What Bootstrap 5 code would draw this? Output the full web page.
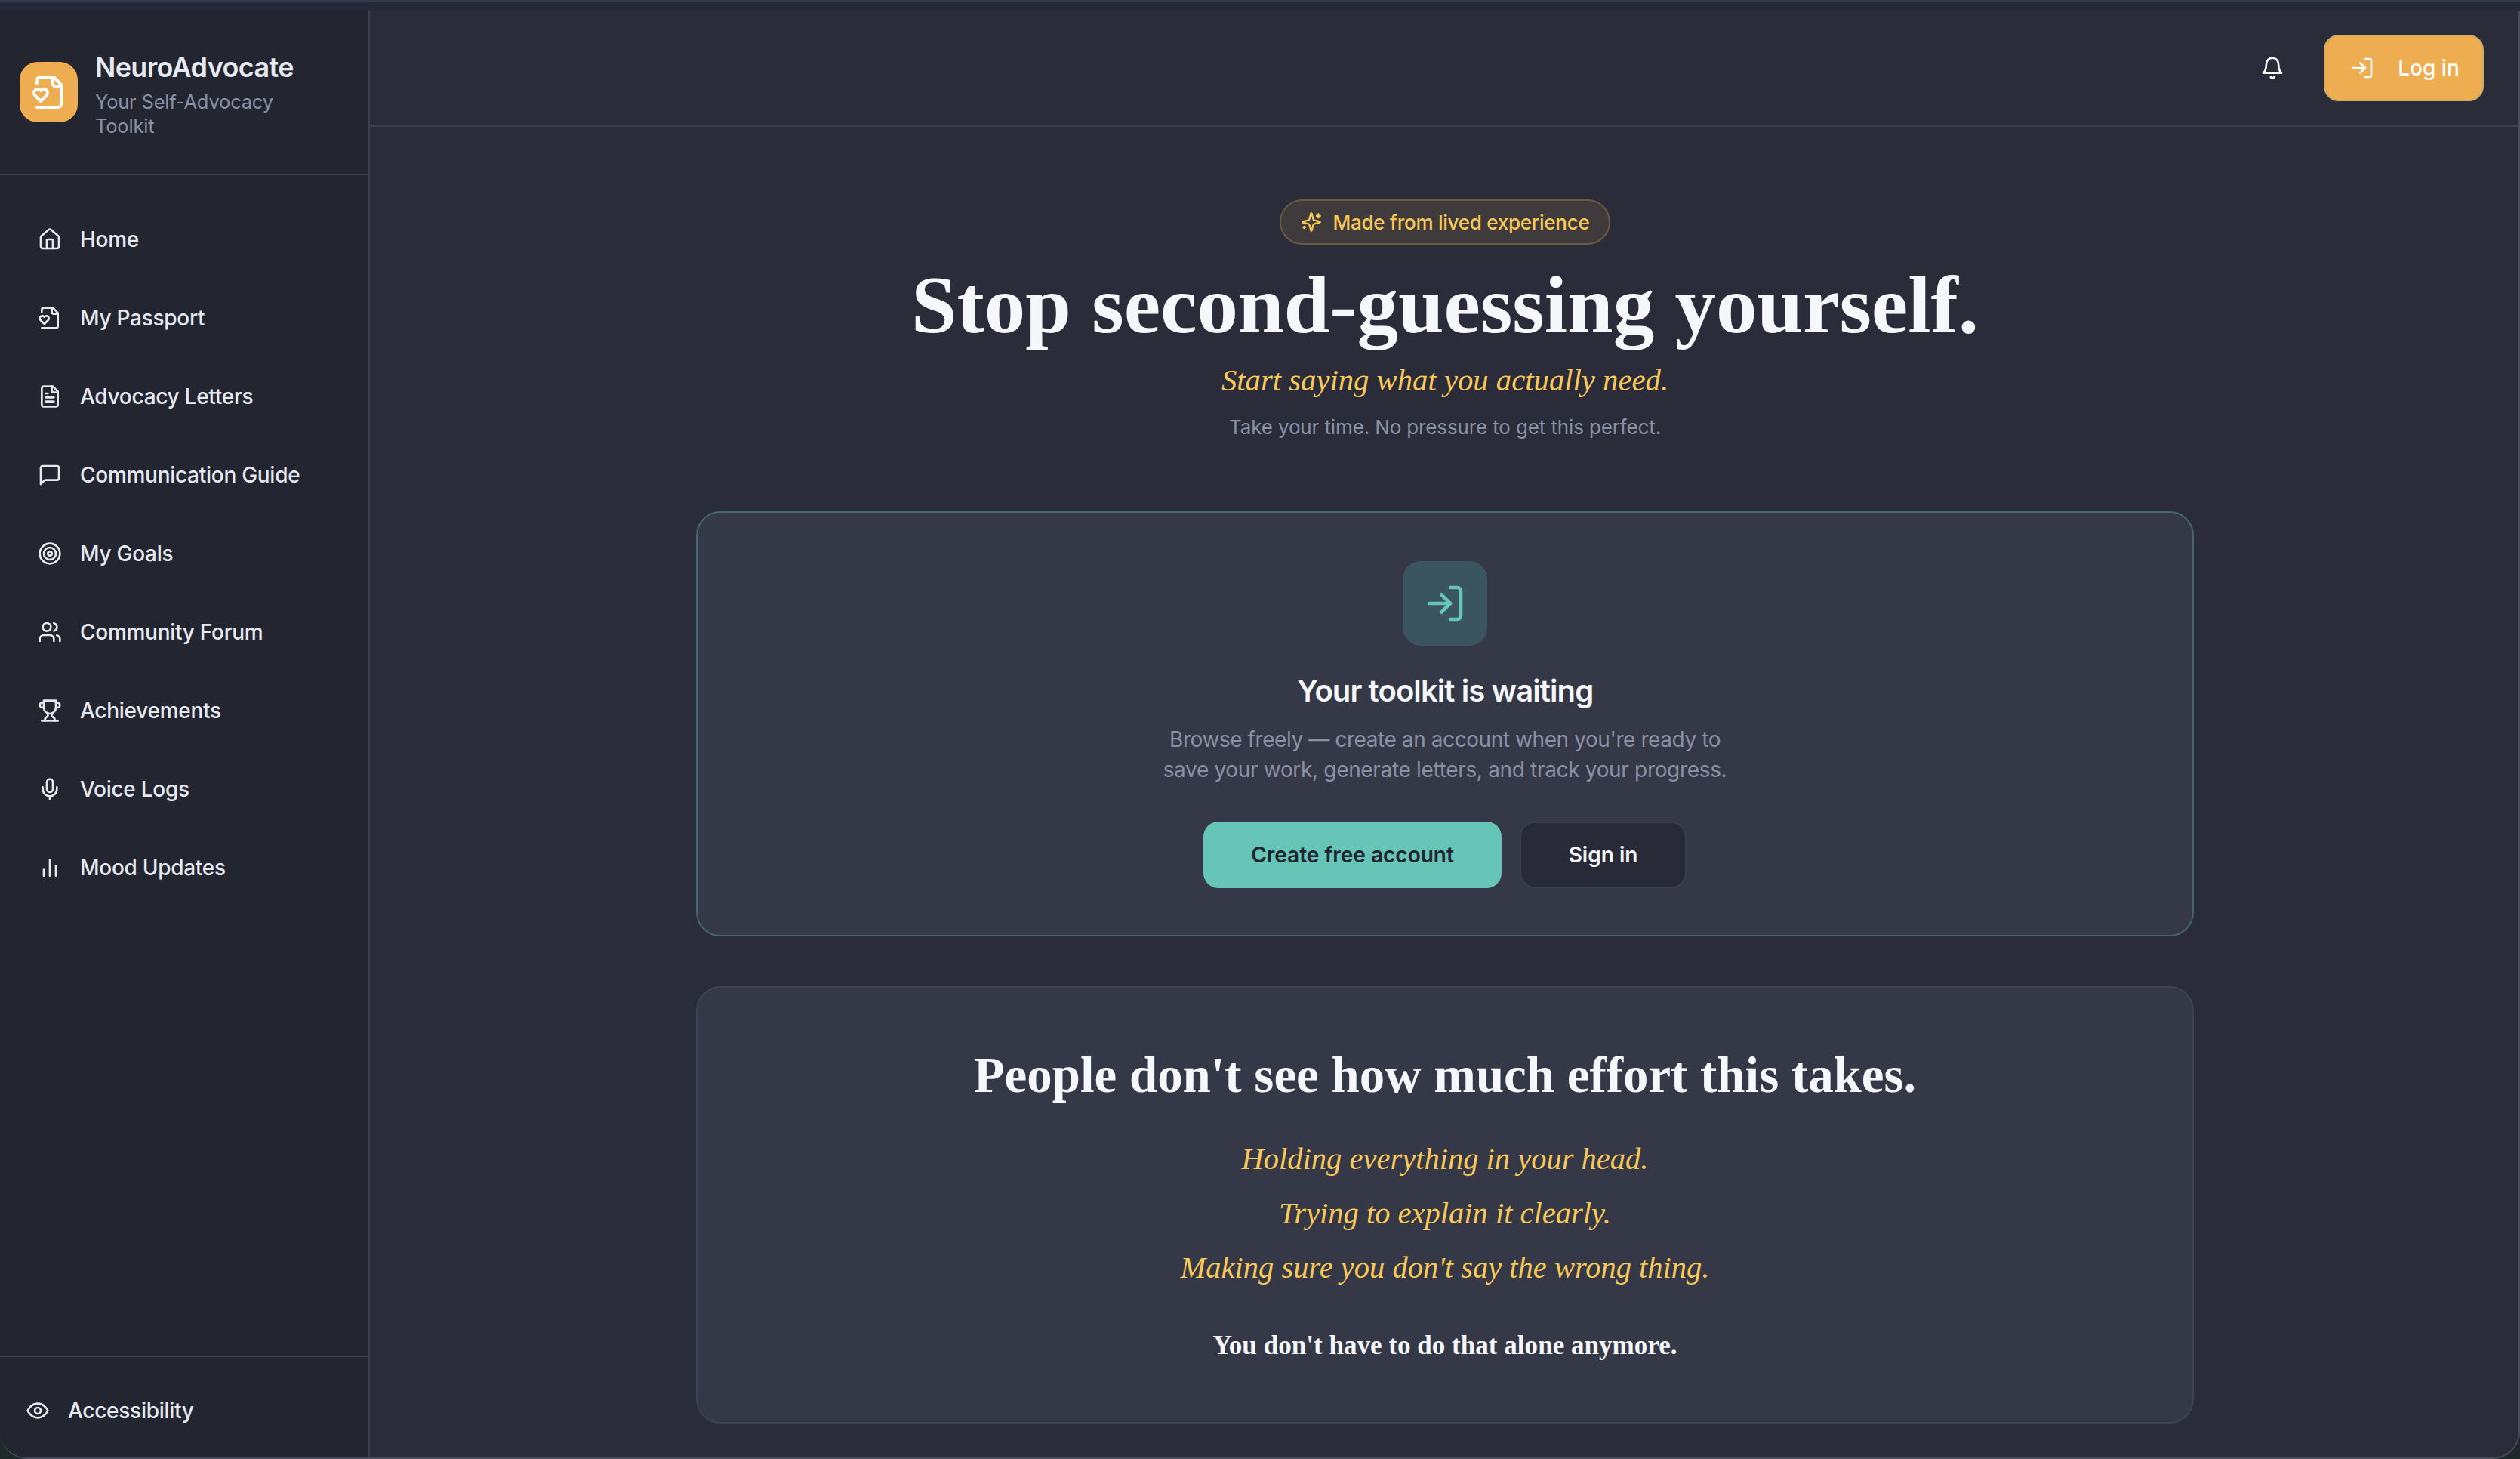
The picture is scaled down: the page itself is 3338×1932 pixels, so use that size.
<!doctype html>
<html lang="en">
<head>
<meta charset="utf-8">
<title>NeuroAdvocate</title>
<link rel="stylesheet" href="https://cdn.jsdelivr.net/npm/bootstrap@5.3.0/dist/css/bootstrap.min.css">
<style>
html,body{height:100%;overflow:hidden}
body{background:#1e2a2a;font-family:Inter,"Liberation Sans",sans-serif;color:#e6e9f0}
.top-strip{height:14px;background:#242a37;border-top:2px solid #333a47;flex:none}
.win{flex:1 1 auto;min-height:0;border-right:2px solid #4a4c5c;border-bottom:2px solid #4a4c5c;border-radius:0 0 36px 36px;overflow:hidden;background:#2a2d39}
.side{width:490px;flex:none;background:#232530;border-right:2px solid #3c3e4f}
.brand{height:218px;padding:0 24px 0 26px;border-bottom:2px solid #3c3e4f;gap:23px}
.logo-tile{width:77px;height:80px;flex:none;background:#eead50;border-radius:24px;color:#fff}
.logo-tile svg{width:48px;height:48px}
.brand-name{font-size:36px;line-height:56px;font-weight:600;letter-spacing:-.65px;color:#e6e9f0}
.brand-sub{font-size:25.5px;line-height:32px;letter-spacing:-.2px;color:#8b91a5;margin-top:2px}
.side-nav{padding:33px 24px 0}
.nav-row{height:104px;padding:0 26px;gap:24px;font-size:28px;font-weight:500;letter-spacing:-.28px;color:#e6e9f0;text-decoration:none}
.nav-row:hover{color:#fff}
.ic{width:32px;height:32px;flex:none;fill:none;stroke:currentColor;stroke-width:2;stroke-linecap:round;stroke-linejoin:round}
.side-foot{height:135px;padding:8px 34px 0;border-top:2px solid #3c3e4f;gap:24px;font-size:28px;font-weight:500;letter-spacing:-.28px}
.topbar{height:154px;flex:none;padding:0 46px 0 0;border-bottom:2px solid #3c3e4f;gap:52px}
.bell{color:#fff}
.login-btn{width:212px;height:88px;background:#eead50;border:2px solid #c9ae66;border-radius:20px;color:#fff;font-size:28px;font-weight:500;gap:31px;padding:0 0 0 3px}
.login-btn:hover{background:#eead50;color:#fff}
.stage{padding-top:96px;padding-left:2px}
.pill-tag{height:60px;padding:0 26px;gap:15px;background:#3f3b3d;border:2px solid #6b5a40;border-radius:30px;color:#f9c858;font-size:26px;font-weight:500;letter-spacing:-.25px}
.pill-tag svg{width:28px;height:28px}
.hero-h{font-family:"Liberation Serif",serif;font-weight:700;font-size:109px;line-height:120px;color:#f6f7fa;margin:20px 0 0}
.hero-i{font-family:"Liberation Serif",serif;font-style:italic;font-size:40.7px;line-height:56px;color:#f9c858;margin:12px 0 0}
.hero-s{font-size:26px;line-height:40px;letter-spacing:-.13px;color:#8b91a5;margin:14px 0 0}
.panel{width:1984px;background:#353846;border:2px solid #3f4252;border-radius:32px;text-align:center}
.panel-a{height:563px;margin-top:91px;border-color:#44686f;padding-top:64px}
.panel-b{height:579px;margin-top:66px;padding-top:73px}
.enter-tile{width:112px;height:112px;background:#3a5560;border-radius:24px;color:#66c5b7}
.enter-tile svg{width:56px;height:56px}
.panel-h{font-size:40px;line-height:56px;font-weight:600;letter-spacing:-.9px;color:#f6f7fa;margin:32px 0 0}
.panel-p{font-size:28px;line-height:40px;letter-spacing:-.33px;color:#8b91a5;margin:16px 0 0}
.panel-p-tight{letter-spacing:-.42px}
.cta{height:88px;border-radius:20px;font-size:28px;font-weight:600;padding:0}
.cta-a{width:395px;background:#66c5b7;border:0;color:#21242e}
.cta-a:hover{background:#66c5b7;color:#21242e}
.cta-b{width:221px;background:#282b37;border:2px solid #3c3e4f;color:#f6f7fa}
.cta-b:hover{background:#282b37;color:#f6f7fa}
.cta-row{gap:24px;margin-top:49px}
.quote-h{font-family:"Liberation Serif",serif;font-weight:700;font-size:66.9px;line-height:84px;color:#f6f7fa;margin:0}
.quote-l{font-family:"Liberation Serif",serif;font-style:italic;font-size:40.5px;line-height:72px;color:#f9c858;margin:0}
.quote-stack{margin-top:34px}
.quote-e{font-family:"Liberation Serif",serif;font-weight:700;font-size:35.1px;line-height:48px;color:#f6f7fa;margin:43px 0 0}
</style>
</head>
<body class="d-flex flex-column">
<div class="top-strip"></div>
<div class="win d-flex">
  <aside class="side d-flex flex-column">
    <div class="brand d-flex align-items-center">
      <div class="logo-tile d-flex align-items-center justify-content-center">
        <svg class="ic" viewBox="0 0 24 24"><path d="M4 22h14a2 2 0 0 0 2-2V7l-5-5H6a2 2 0 0 0-2 2v2"/><path d="M14 2v4a2 2 0 0 0 2 2h4"/><path d="M10.29 10.7a2.43 2.43 0 0 0-2.66-.52c-.29.12-.56.3-.78.53l-.35.34-.35-.34a2.43 2.43 0 0 0-2.65-.53c-.3.12-.56.3-.79.53-.95.94-1 2.53.2 3.74L6.5 18l3.6-3.55c1.2-1.21 1.14-2.8.19-3.74Z"/></svg>
      </div>
      <div>
        <div class="brand-name">NeuroAdvocate</div>
        <div class="brand-sub">Your Self-Advocacy<br>Toolkit</div>
      </div>
    </div>
    <nav class="side-nav d-flex flex-column flex-grow-1">
      <a class="nav-row d-flex align-items-center" href="#"><svg class="ic" viewBox="0 0 24 24"><path d="M15 21v-8a1 1 0 0 0-1-1h-4a1 1 0 0 0-1 1v8"/><path d="M3 10a2 2 0 0 1 .709-1.528l7-5.999a2 2 0 0 1 2.582 0l7 5.999A2 2 0 0 1 21 10v9a2 2 0 0 1-2 2H5a2 2 0 0 1-2-2z"/></svg>Home</a>
      <a class="nav-row d-flex align-items-center" href="#"><svg class="ic" viewBox="0 0 24 24"><path d="M4 22h14a2 2 0 0 0 2-2V7l-5-5H6a2 2 0 0 0-2 2v2"/><path d="M14 2v4a2 2 0 0 0 2 2h4"/><path d="M10.29 10.7a2.43 2.43 0 0 0-2.66-.52c-.29.12-.56.3-.78.53l-.35.34-.35-.34a2.43 2.43 0 0 0-2.65-.53c-.3.12-.56.3-.79.53-.95.94-1 2.53.2 3.74L6.5 18l3.6-3.55c1.2-1.21 1.14-2.8.19-3.74Z"/></svg>My Passport</a>
      <a class="nav-row d-flex align-items-center" href="#"><svg class="ic" viewBox="0 0 24 24"><path d="M15 2H6a2 2 0 0 0-2 2v16a2 2 0 0 0 2 2h12a2 2 0 0 0 2-2V7Z"/><path d="M14 2v4a2 2 0 0 0 2 2h4"/><path d="M10 9H8"/><path d="M16 13H8"/><path d="M16 17H8"/></svg>Advocacy Letters</a>
      <a class="nav-row d-flex align-items-center" href="#"><svg class="ic" viewBox="0 0 24 24"><path d="M21 15a2 2 0 0 1-2 2H7l-4 4V5a2 2 0 0 1 2-2h14a2 2 0 0 1 2 2z"/></svg>Communication Guide</a>
      <a class="nav-row d-flex align-items-center" href="#"><svg class="ic" viewBox="0 0 24 24"><circle cx="12" cy="12" r="10"/><circle cx="12" cy="12" r="6"/><circle cx="12" cy="12" r="2"/></svg>My Goals</a>
      <a class="nav-row d-flex align-items-center" href="#"><svg class="ic" viewBox="0 0 24 24"><path d="M16 21v-2a4 4 0 0 0-4-4H6a4 4 0 0 0-4 4v2"/><circle cx="9" cy="7" r="4"/><path d="M22 21v-2a4 4 0 0 0-3-3.87"/><path d="M16 3.13a4 4 0 0 1 0 7.75"/></svg>Community Forum</a>
      <a class="nav-row d-flex align-items-center" href="#"><svg class="ic" viewBox="0 0 24 24"><path d="M6 9H4.5a2.5 2.5 0 0 1 0-5H6"/><path d="M18 9h1.5a2.5 2.5 0 0 0 0-5H18"/><path d="M4 22h16"/><path d="M10 14.66V17c0 .55-.47.98-.97 1.21C7.85 18.75 7 20.24 7 22"/><path d="M14 14.66V17c0 .55.47.98.97 1.21C16.15 18.75 17 20.24 17 22"/><path d="M18 2H6v7a6 6 0 0 0 12 0V2Z"/></svg>Achievements</a>
      <a class="nav-row d-flex align-items-center" href="#"><svg class="ic" viewBox="0 0 24 24"><path d="M12 2a3 3 0 0 0-3 3v7a3 3 0 0 0 6 0V5a3 3 0 0 0-3-3Z"/><path d="M19 10v2a7 7 0 0 1-14 0v-2"/><line x1="12" x2="12" y1="19" y2="22"/></svg>Voice Logs</a>
      <a class="nav-row d-flex align-items-center" href="#"><svg class="ic" viewBox="0 0 24 24"><line x1="18" x2="18" y1="20" y2="10"/><line x1="12" x2="12" y1="20" y2="4"/><line x1="6" x2="6" y1="20" y2="14"/></svg>Mood Updates</a>
    </nav>
    <div class="side-foot d-flex align-items-center"><svg class="ic" viewBox="0 0 24 24"><path d="M2 12s3-7 10-7 10 7 10 7-3 7-10 7-10-7-10-7Z"/><circle cx="12" cy="12" r="3"/></svg>Accessibility</div>
  </aside>
  <div class="flex-grow-1 d-flex flex-column">
    <header class="topbar d-flex align-items-center justify-content-end">
      <svg class="ic bell" viewBox="0 0 24 24"><path d="M6 8a6 6 0 0 1 12 0c0 7 3 9 3 9H3s3-2 3-9"/><path d="M10.3 21a1.94 1.94 0 0 0 3.4 0"/></svg>
      <button class="btn login-btn d-flex align-items-center justify-content-center" type="button"><svg class="ic" viewBox="0 0 24 24"><path d="M15 3h4a2 2 0 0 1 2 2v14a2 2 0 0 1-2 2h-4"/><polyline points="10 17 15 12 10 7"/><line x1="15" x2="3" y1="12" y2="12"/></svg>Log in</button>
    </header>
    <main class="stage d-flex flex-column align-items-center text-center">
      <div class="pill-tag d-inline-flex align-items-center"><svg class="ic" viewBox="0 0 24 24"><path d="M9.937 15.5A2 2 0 0 0 8.5 14.063l-6.135-1.582a.5.5 0 0 1 0-.962L8.5 9.936A2 2 0 0 0 9.937 8.5l1.582-6.135a.5.5 0 0 1 .963 0L14.063 8.5A2 2 0 0 0 15.5 9.937l6.135 1.581a.5.5 0 0 1 0 .964L15.5 14.063a2 2 0 0 0-1.437 1.437l-1.582 6.135a.5.5 0 0 1-.963 0z"/><path d="M20 3v4"/><path d="M22 5h-4"/><path d="M4 17v2"/><path d="M5 18H3"/></svg>Made from lived experience</div>
      <h1 class="hero-h">Stop second-guessing yourself.</h1>
      <p class="hero-i">Start saying what you actually need.</p>
      <p class="hero-s">Take your time. No pressure to get this perfect.</p>
      <section class="panel panel-a d-flex flex-column align-items-center">
        <div class="enter-tile d-flex align-items-center justify-content-center"><svg class="ic" viewBox="0 0 24 24"><path d="M15 3h4a2 2 0 0 1 2 2v14a2 2 0 0 1-2 2h-4"/><polyline points="10 17 15 12 10 7"/><line x1="15" x2="3" y1="12" y2="12"/></svg></div>
        <h2 class="panel-h">Your toolkit is waiting</h2>
        <p class="panel-p"><span class="panel-p-tight">Browse freely — create an account when you're ready to</span><br>save your work, generate letters, and track your progress.</p>
        <div class="cta-row d-flex">
          <button class="btn cta cta-a" type="button">Create free account</button>
          <button class="btn cta cta-b" type="button">Sign in</button>
        </div>
      </section>
      <section class="panel panel-b">
        <h2 class="quote-h">People don't see how much effort this takes.</h2>
        <div class="quote-stack">
          <p class="quote-l">Holding everything in your head.</p>
          <p class="quote-l">Trying to explain it clearly.</p>
          <p class="quote-l">Making sure you don't say the wrong thing.</p>
        </div>
        <p class="quote-e">You don't have to do that alone anymore.</p>
      </section>
    </main>
  </div>
</div>
<script src="https://cdn.jsdelivr.net/npm/bootstrap@5.3.0/dist/js/bootstrap.bundle.min.js"></script>
</body>
</html>
